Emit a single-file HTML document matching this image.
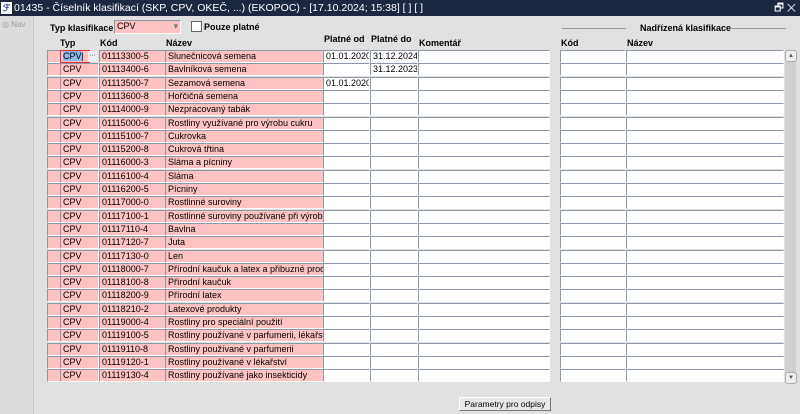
<!DOCTYPE html>
<html><head><meta charset="utf-8"><style>
body{margin:0;width:800px;height:414px;background:#e1e1e1;font-family:"Liberation Sans",Arial,sans-serif;font-size:9px;color:#000;position:relative;overflow:hidden}
.tb{position:absolute;left:0;top:0;width:800px;height:16px;background:#1b2840;color:#fff;font-size:10.5px;line-height:16px}
.nav{position:absolute;left:0;top:16px;width:33px;height:398px;background:#dcdcdc;border-right:1px solid #c8c8c8}
.a{position:absolute}
.c{position:absolute;height:11px;line-height:11px;border:1px solid;border-color:#8c97a8 #fff #fff #8c97a8;box-sizing:content-box;padding-left:2px;white-space:nowrap;overflow:hidden;background:#fff}
.p{background:#ffc2c2}
.h{position:absolute;font-weight:bold;font-size:9px}
.r{position:absolute;left:0;width:800px;height:13px}
</style></head><body>
<div class="tb"><span style="display:inline-block;width:11px;height:12px;background:#fff;color:#1b3aa0;font-weight:bold;font-size:9px;line-height:12px;text-align:center;margin:2px 2px 0 1px;vertical-align:top">ℱ</span>01435 - Číselník klasifikací (SKP, CPV, OKEČ, ...) (EKOPOC) - [17.10.2024; 15:38] [ ] [ ]<span style="position:absolute;right:4px;top:0">🗗 ✕</span></div>
<div class="nav"><span style="position:absolute;left:2px;top:4px;color:#999;font-size:8px">◎ Nav</span></div>
<div class="h" style="left:50px;top:23px">Typ klasifikace</div>
<div class="c p" style="left:114px;top:20px;width:63px;height:12px">CPV<span style="position:absolute;right:2px;color:#777">▾</span></div>
<div class="a" style="left:191px;top:21px;width:9px;height:9px;background:#fff;border:1px solid #666"></div>
<div class="h" style="left:204px;top:22px">Pouze platné</div>
<div class="a" style="left:562px;top:28px;width:64px;border-top:1px solid #999"></div>
<div class="h" style="left:640px;top:23px">Nadřízená klasifikace</div>
<div class="a" style="left:730px;top:28px;width:56px;border-top:1px solid #999"></div>
<div class="h" style="left:60px;top:38px">Typ</div>
<div class="h" style="left:100px;top:38px">Kód</div>
<div class="h" style="left:166px;top:38px">Název</div>
<div class="h" style="left:324px;top:34px">Platné od</div>
<div class="h" style="left:371px;top:34px">Platné do</div>
<div class="h" style="left:419px;top:38px">Komentář</div>
<div class="h" style="left:561px;top:38px">Kód</div>
<div class="h" style="left:627px;top:38px">Název</div>
<div class="a" style="left:785px;top:50px;width:11px;height:333px;background:#cfcfcf"></div>
<div class="a" style="left:785px;top:50px;width:10px;height:10px;background:#eee;border:1px solid #aaa;border-radius:3px;font-size:6px;text-align:center;line-height:10px;color:#555">▲</div>
<div class="a" style="left:785px;top:372px;width:10px;height:10px;background:#eee;border:1px solid #aaa;border-radius:3px;font-size:6px;text-align:center;line-height:10px;color:#555">▼</div>
<div id="rows"></div>
<div class="a" style="left:459px;top:397px;width:90px;height:12px;background:#e8e8e8;border:1px solid #888;border-color:#fff #777 #777 #fff;text-align:center;line-height:12px;font-size:8.5px">Parametry pro odpisy</div>
<script>
var d=[["01113300-5","Slunečnicová semena","01.01.2020","31.12.2024"],["01113400-6","Bavlníková semena","","31.12.2023"],["01113500-7","Sezamová semena","01.01.2020",""],["01113600-8","Hořčičná semena"],["01114000-9","Nezpracovaný tabák"],["01115000-6","Rostliny využívané pro výrobu cukru"],["01115100-7","Cukrovka"],["01115200-8","Cukrová třtina"],["01116000-3","Sláma a pícniny"],["01116100-4","Sláma"],["01116200-5","Pícniny"],["01117000-0","Rostlinné suroviny"],["01117100-1","Rostlinné suroviny používané při výrobě textilu"],["01117110-4","Bavlna"],["01117120-7","Juta"],["01117130-0","Len"],["01118000-7","Přírodní kaučuk a latex a přibuzné produkty"],["01118100-8","Přírodní kaučuk"],["01118200-9","Přírodní latex"],["01118210-2","Latexové produkty"],["01119000-4","Rostliny pro speciální použití"],["01119100-5","Rostliny používané v parfumerii, lékařství nebo"],["01119110-8","Rostliny používané v parfumerii"],["01119120-1","Rostliny používané v lékařství"],["01119130-4","Rostliny používané jako insekticidy"]];
var h="";
d.forEach(function(r,i){var t=(50+i*13.3).toFixed(1);
function c(l,w,txt,cls,ex){return '<div class="c '+(cls||"")+'" style="left:'+l+'px;width:'+w+'px;'+(ex||"")+'">'+(txt||"")+'</div>';}
h+='<div class="r" style="top:'+t+'px">';
h+=c(47,10,"","p");
h+=i==0?c(60,26,'<span style="background:#8fb8f0">CPV</span>|',"p","border:1px solid #e03030;")+'<div class="a" style="left:88px;top:1px;width:9px;height:11px;background:#eee;font-size:7px;line-height:9px;text-align:center">···</div>':c(60,35,"CPV","p");
h+=c(99,63,r[0],"p");h+=c(165,155,r[1],"p");
h+=c(323,43,r[2]);h+=c(370,44,r[3]);h+=c(418,128);h+=c(560,62);h+=c(626,154);
h+='</div>';});
document.getElementById("rows").innerHTML=h;
</script>
</body></html>
